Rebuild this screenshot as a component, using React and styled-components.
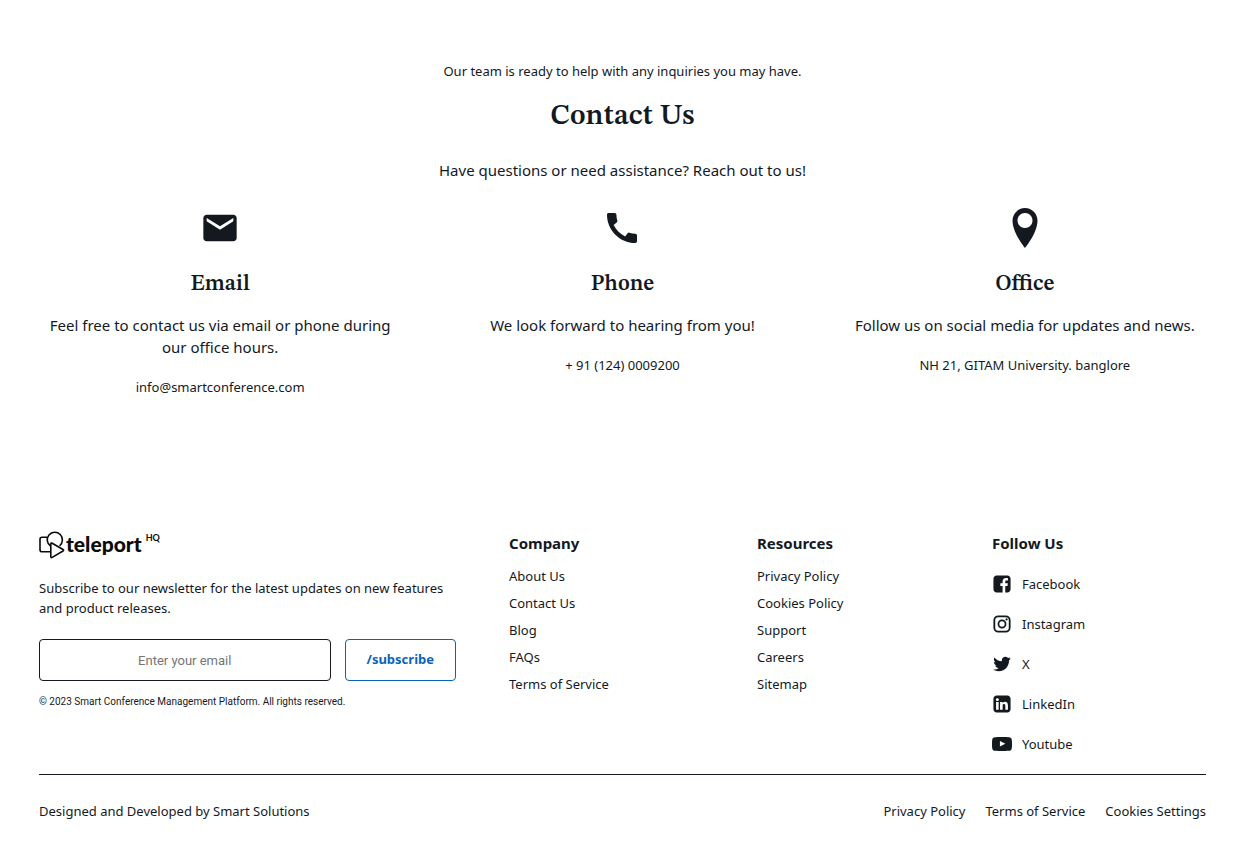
import React from "react";
import styled, { createGlobalStyle } from "styled-components";
import { MdEmail, MdCall } from "react-icons/md";

const GlobalStyle = createGlobalStyle`
  *, *::before, *::after { box-sizing: border-box; }
  body {
    margin: 0;
    background: #fff;
    color: #13191f;
    font-family: "Noto Sans", "Open Sans", sans-serif;
    font-size: 13px;
    line-height: 20px;
  }
  h2, h3, h4, p, ul { margin: 0; padding: 0; }
  a { color: inherit; text-decoration: none; }
`;

const Page = styled.div`
  padding: 61px 32px 34px 39px;
`;

const Contact = styled.section`
  text-align: center;
`;

const Heading = styled.h2`
  margin: 18px 0 24px;
  font: 600 29px/36px "STIX Two Text", "Source Serif 4", "Liberation Serif", serif;
`;

const Text = styled.p`
  font-size: 15px;
  line-height: 22px;
`;

const Cards = styled.div`
  display: grid;
  grid-template-columns: repeat(3, 1fr);
  gap: 40px;
  margin-top: 27px;
`;

const Card = styled.article`
  display: flex;
  flex-direction: column;
  align-items: center;
`;

const CardTitle = styled.h3`
  margin: 22px 0 16px;
  font: 600 22px/28px "STIX Two Text", "Source Serif 4", "Liberation Serif", serif;
`;

const CardDetail = styled.p`
  margin-top: 19px;
`;

const Footer = styled.footer`
  margin-top: 133px;
`;

const FooterTop = styled.div`
  display: grid;
  grid-template-columns: 470fr 248fr 235fr 214fr;
  padding-bottom: 20px;
  border-bottom: 1px solid #13191f;
`;

const Newsletter = styled.div`
  padding: 1px 53px 0 0;
`;

const Logo = styled.a`
  display: flex;
  align-items: flex-start;
  height: 28px;
  color: #0a0a0a;
`;

const LogoName = styled.span`
  margin-left: 1px;
  font: 900 21px/26px Lato, sans-serif;
`;

const LogoMark = styled.sup`
  margin-left: 4px;
  font: 700 9px/14px Lato, sans-serif;
`;

const Pitch = styled.p`
  margin-top: 19px;
`;

const Form = styled.form`
  display: flex;
  gap: 14px;
  margin: 21px 0 13px;
`;

const EmailInput = styled.input`
  flex: 1;
  min-width: 0;
  height: 42px;
  border: 1px solid #13191f;
  border-radius: 4px;
  background: #fff;
  text-align: center;
  font: 13px/20px Roboto, sans-serif;
  &::placeholder { color: #757575; }
`;

const Subscribe = styled.button`
  height: 42px;
  padding: 0 21px 2px;
  border: 1px solid #0a63b8;
  border-radius: 4px;
  background: #fff;
  color: #0a63b8;
  font: 700 13px/20px "Noto Sans", sans-serif;
`;

const Copyright = styled.p`
  font: 10px/16px Roboto, sans-serif;
`;

const Column = styled.nav`
  padding-top: 2px;
`;

const ColumnTitle = styled.h4`
  font-size: 15px;
  line-height: 22px;
`;

const LinkList = styled.ul`
  display: flex;
  flex-direction: column;
  gap: ${(p) => (p.$social ? 20 : 7)}px;
  margin-top: ${(p) => (p.$social ? 20 : 12)}px;
  list-style: none;
`;

const SocialLink = styled.a`
  display: flex;
  align-items: center;
  gap: 10px;
`;

const FooterBottom = styled.div`
  display: flex;
  justify-content: space-between;
  margin-top: 26px;
`;

const Legal = styled.nav`
  display: flex;
  gap: 20px;
`;

const SocialIcon = ({ width = 877.714, children }) => (
  <svg width="20" height="20" viewBox={`0 0 ${width} 1024`} fill="currentColor" aria-hidden="true">
    {children}
  </svg>
);

const PinIcon = () => (
  <svg width="40" height="40" viewBox="0 0 1024 1024" fill="currentColor" aria-hidden="true">
    <path d="M512 0c-176.732 0-320 143.268-320 320 0 320 320 704 320 704s320-384 320-704c0-176.732-143.27-320-320-320zM512 512c-106.04 0-192-85.96-192-192s85.96-192 192-192 192 85.96 192 192-85.96 192-192 192z" />
  </svg>
);

const TeleportShapes = () => (
  <svg width="26" height="28" viewBox="0 0 26 28" fill="none" stroke="currentColor" strokeWidth="1.6" strokeLinejoin="round" aria-hidden="true">
    <path d="M8.2 6.2H3a2 2 0 0 0-2 2v10.6a2 2 0 0 0 2 2h8.6" />
    <path d="M11.6 15.2A7.6 7.6 0 1 1 20.6 14.8" />
    <path d="M13.2 12.2 24 18.5q1.2.8 0 1.5L13.2 26.4q-1.4.7-1.4-.8V13q0-1.5 1.4-.8Z" />
  </svg>
);

const cards = [
  {
    title: "Email",
    icon: <MdEmail size={40} />,
    text: "Feel free to contact us via email or phone during our office hours.",
    detail: "info@smartconference.com",
  },
  {
    title: "Phone",
    icon: <MdCall size={40} />,
    text: "We look forward to hearing from you!",
    detail: "+ 91 (124) 0009200",
  },
  {
    title: "Office",
    icon: <PinIcon />,
    text: "Follow us on social media for updates and news.",
    detail: "NH 21, GITAM University. banglore",
  },
];

const columns = [
  { title: "Company", links: ["About Us", "Contact Us", "Blog", "FAQs", "Terms of Service"] },
  { title: "Resources", links: ["Privacy Policy", "Cookies Policy", "Support", "Careers", "Sitemap"] },
];

const socials = [
  {
    name: "Facebook",
    icon: (
      <SocialIcon>
        <path d="M713.143 73.143c90.857 0 164.571 73.714 164.571 164.571v548.571c0 90.857-73.714 164.571-164.571 164.571h-107.429v-340h113.714l17.143-132.571h-130.857v-84.571c0-38.286 10.286-64 65.714-64l69.714-0.571v-118.286c-12-1.714-53.714-5.143-101.714-5.143-101.143 0-170.857 61.714-170.857 174.857v97.714h-114.286v132.571h114.286v340h-304c-90.857 0-164.571-73.714-164.571-164.571v-548.571c0-90.857 73.714-164.571 164.571-164.571h548.571z" />
      </SocialIcon>
    ),
  },
  {
    name: "Instagram",
    icon: (
      <SocialIcon>
        <rect x="46" y="119" width="786" height="786" rx="200" fill="none" stroke="currentColor" strokeWidth="92" />
        <circle cx="438.857" cy="512" r="182" fill="none" stroke="currentColor" strokeWidth="90" />
        <circle cx="673" cy="278" r="56" />
      </SocialIcon>
    ),
  },
  {
    name: "X",
    icon: (
      <SocialIcon width={950.857}>
        <path d="M925.714 233.143c-25.143 36.571-56.571 69.143-92.571 95.429 0.571 8 0.571 16 0.571 24 0 244-185.714 525.143-525.143 525.143-104.571 0-201.714-30.286-283.429-82.857 14.857 1.714 29.143 2.286 44.571 2.286 86.286 0 165.714-29.143 229.143-78.857-81.143-1.714-149.143-54.857-172.571-128 11.429 1.714 22.857 2.857 34.857 2.857 16.571 0 33.143-2.286 48.571-6.286-84.571-17.143-148-91.429-148-181.143v-2.286c24.571 13.714 53.143 22.286 83.429 23.429-49.714-33.143-82.286-89.714-82.286-153.714 0-34.286 9.143-65.714 25.143-93.143 90.857 112 227.429 185.143 380.571 193.143-2.857-13.714-4.571-28-4.571-42.286 0-101.714 82.286-184.571 184.571-184.571 53.143 0 101.143 22.286 134.857 58.286 41.714-8 81.714-23.429 117.143-44.571-13.714 42.857-42.857 78.857-81.143 101.714 37.143-4 73.143-14.286 106.286-28.571z" />
      </SocialIcon>
    ),
  },
  {
    name: "LinkedIn",
    icon: (
      <SocialIcon>
        <path d="M135.429 808h132v-396.571h-132v396.571zM276 289.143c-0.571-38.857-28.571-68.571-73.714-68.571s-74.857 29.714-74.857 68.571c0 37.714 28.571 68.571 73.143 68.571h0.571c46.286 0 74.857-30.857 74.857-68.571zM610.286 808h132v-227.429c0-121.714-65.143-178.286-152-178.286-70.857 0-102.286 39.429-119.429 66.857h1.143v-57.714h-132s1.714 37.143 0 396.571v0h132v-221.714c0-11.429 0.571-23.429 4-32 9.714-23.429 31.429-48 68-48 47.429 0 66.286 36.571 66.286 89.714v212zM877.714 237.714v548.571c0 90.857-73.714 164.571-164.571 164.571h-548.571c-90.857 0-164.571-73.714-164.571-164.571v-548.571c0-90.857 73.714-164.571 164.571-164.571h548.571c90.857 0 164.571 73.714 164.571 164.571z" />
      </SocialIcon>
    ),
  },
  {
    name: "Youtube",
    icon: (
      <SocialIcon width={1024}>
        <path d="M1013.8 307.2c0 0-10-70.6-40.8-101.6-39-40.8-82.6-41-102.6-43.4-143.2-10.4-358.2-10.4-358.2-10.4h-0.4c0 0-215 0-358.2 10.4-20 2.4-63.6 2.6-102.6 43.4-30.8 31-40.6 101.6-40.6 101.6s-10.2 82.8-10.2 165.8v77.6c0 82.8 10.2 165.8 10.2 165.8s10 70.6 40.6 101.6c39 40.8 90.2 39.4 113 43.8 82 7.8 348.2 10.2 348.2 10.2s215.2-0.4 358.4-10.6c20-2.4 63.6-2.6 102.6-43.4 30.8-31 40.8-101.6 40.8-101.6s10.2-82.8 10.2-165.8v-77.6c-0.2-82.8-10.4-165.8-10.4-165.8zM406.2 644.8v-287.8l276.6 144.4-276.6 143.4z" />
      </SocialIcon>
    ),
  },
];

export default function App() {
  return (
    <>
      <GlobalStyle />
      <Page>
        <Contact>
          <p>Our team is ready to help with any inquiries you may have.</p>
          <Heading>Contact Us</Heading>
          <Text>Have questions or need assistance? Reach out to us!</Text>
          <Cards>
            {cards.map((card) => (
              <Card key={card.title}>
                {card.icon}
                <CardTitle>{card.title}</CardTitle>
                <Text>{card.text}</Text>
                <CardDetail>{card.detail}</CardDetail>
              </Card>
            ))}
          </Cards>
        </Contact>
        <Footer>
          <FooterTop>
            <Newsletter>
              <Logo href="#">
                <TeleportShapes />
                <LogoName>teleport</LogoName>
                <LogoMark>HQ</LogoMark>
              </Logo>
              <Pitch>Subscribe to our newsletter for the latest updates on new features and product releases.</Pitch>
              <Form onSubmit={(e) => e.preventDefault()}>
                <EmailInput type="email" placeholder="Enter your email" aria-label="Enter your email" />
                <Subscribe type="submit">/subscribe</Subscribe>
              </Form>
              <Copyright>© 2023 Smart Conference Management Platform. All rights reserved.</Copyright>
            </Newsletter>
            {columns.map((column) => (
              <Column key={column.title} aria-label={column.title}>
                <ColumnTitle>{column.title}</ColumnTitle>
                <LinkList>
                  {column.links.map((link) => (
                    <li key={link}><a href="#">{link}</a></li>
                  ))}
                </LinkList>
              </Column>
            ))}
            <Column aria-label="Follow Us">
              <ColumnTitle>Follow Us</ColumnTitle>
              <LinkList $social>
                {socials.map((social) => (
                  <li key={social.name}>
                    <SocialLink href="#">{social.icon}{social.name}</SocialLink>
                  </li>
                ))}
              </LinkList>
            </Column>
          </FooterTop>
          <FooterBottom>
            <p>Designed and Developed by Smart Solutions</p>
            <Legal aria-label="Legal">
              <a href="#">Privacy Policy</a>
              <a href="#">Terms of Service</a>
              <a href="#">Cookies Settings</a>
            </Legal>
          </FooterBottom>
        </Footer>
      </Page>
    </>
  );
}
